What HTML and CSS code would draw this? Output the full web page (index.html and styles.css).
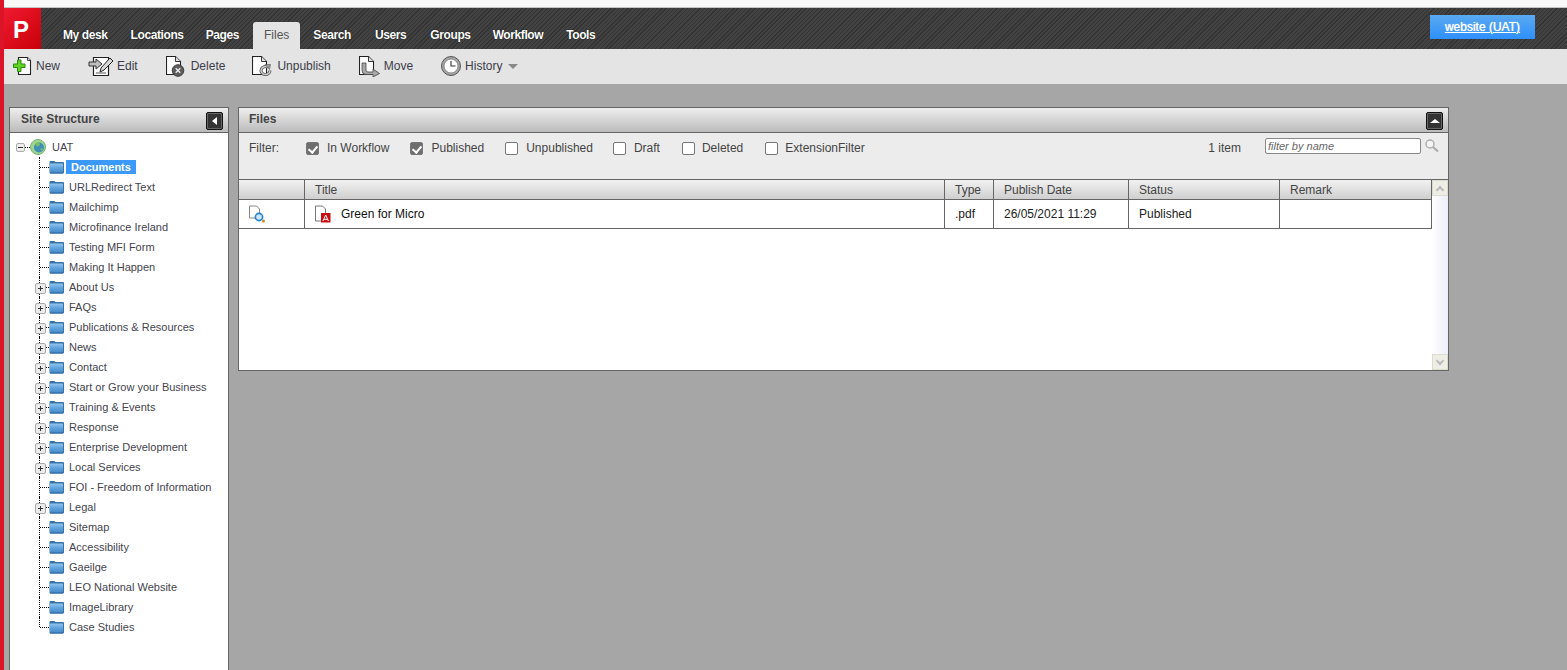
FILE: index.html
```html
<!DOCTYPE html>
<html lang="en">
<head>
<meta charset="utf-8">
<title>Files</title>
<link rel="stylesheet" href="styles.css">
</head>
<body>
<svg class="sprites" width="0" height="0" aria-hidden="true">
  <defs>
    <linearGradient id="fgrad" x1="0" y1="0" x2="0" y2="1">
      <stop offset="0" stop-color="#93c5ee"/>
      <stop offset=".45" stop-color="#62a4dd"/>
      <stop offset="1" stop-color="#4288c6"/>
    </linearGradient>
    <symbol id="folder" viewBox="0 0 15 14">
      <path d="M0.5 2 q0 -1 1 -1 h3.500 q1 0 1.500 1 h7.500 q1 0 1 1 v9.500 q0 1 -1 1 h-12.500 q-1 0 -1 -1 z" fill="#3673ab"/>
      <rect x="1" y="3.500" width="13" height="9.500" rx=".5" fill="url(#fgrad)"/>
      <rect x="1" y="12.500" width="13" height="1" fill="#2a659c"/>
    </symbol>
    <symbol id="doc" viewBox="0 0 22 22">
      <path d="M3.500 1.500 h9 l5 5 v13 h-14 z" fill="#fff" stroke="#222" stroke-width="1.100"/>
      <path d="M12.500 1.500 v5 h5" fill="#ddd" stroke="#222" stroke-width=".9"/>
    </symbol>
  </defs>
</svg>
<div class="topstrip"></div>
<header class="nav">
  <div class="logo">P</div>
  <nav class="menu">
    <a class="menu-item">My desk</a>
    <a class="menu-item">Locations</a>
    <a class="menu-item">Pages</a>
    <a class="menu-item active">Files</a>
    <a class="menu-item">Search</a>
    <a class="menu-item">Users</a>
    <a class="menu-item">Groups</a>
    <a class="menu-item">Workflow</a>
    <a class="menu-item">Tools</a>
  </nav>
  <a class="site-btn" href="#">website (UAT)</a>
</header>
<div class="toolbar">
  <span class="tool t-new">
    <svg class="ticon" viewBox="0 0 22 22"><path d="M7.500 2.500 h9 l3 3 v14 h-12 z" fill="#fff" stroke="#222" stroke-width="1.100"/><path d="M16.500 2.500 v3 h3" fill="#ddd" stroke="#222" stroke-width=".8"/><path d="M2.500 9 h4 v-4 h3.500 v4 h4 v3.500 h-4 v4 h-3.500 v-4 h-4 z" fill="#62d321" stroke="#2b8a12"/></svg>New
  </span>
  <span class="tool t-edit">
    <svg class="ticon wide" viewBox="0 0 26 22"><path d="M5.500 2.500 h15 v18 h-15 z" fill="#fff" stroke="#222" stroke-width="1.200"/><path d="M1 7 h7 v-3 l6 5 -6 5 v-3 h-7 z" fill="#bdbdbd" stroke="#333"/><path d="M12 17 l1 -4 9 -10 3 3 -9 9 z" fill="#d8d8d8" stroke="#222"/><path d="M8 18 h10" stroke="#555"/></svg>Edit
  </span>
  <span class="tool t-delete">
    <svg class="ticon" viewBox="3 0 22 22"><use href="#doc" width="22" height="22"/><circle cx="15" cy="15.500" r="5.800" fill="#5c5c5c" stroke="#3a3a3a"/><path d="M12.700 13.200 l4.600 4.600 m0 -4.600 l-4.600 4.600" stroke="#eee" stroke-width="1.300"/></svg>Delete
  </span>
  <span class="tool t-unpub">
    <svg class="ticon" viewBox="3 0 22 22"><use href="#doc" width="22" height="22"/><path d="M21 15.500 a4.500 4 0 1 1 -2 -3.300" fill="none" stroke="#555" stroke-width="3"/><path d="M21 15.500 a4.500 4 0 1 1 -2 -3.300" fill="none" stroke="#c8c8c8" stroke-width="1.500"/><path d="M16 9.500 l5.500 0 -1 5 z" fill="#999" stroke="#555" stroke-width=".6"/></svg>Unpublish
  </span>
  <span class="tool t-move">
    <svg class="ticon" viewBox="3 0 22 22"><use href="#doc" width="22" height="22"/><path d="M10 8 v7 a2 2 0 0 0 2 2 h5 v-3 l6.500 4.500 -6.500 3.500 v-2.500 h-7 a4 4 0 0 1 -4 -4 v-7.500 z" fill="#a8a8a8" stroke="#444" stroke-width=".8"/></svg>Move
  </span>
  <span class="tool t-history">
    <svg class="ticon" viewBox="0 0 22 22"><circle cx="11" cy="11" r="9.500" fill="#a6a6a6" stroke="#555"/><circle cx="11" cy="11" r="7" fill="#fff" stroke="#777" stroke-width=".8"/><path d="M11 6 v5 h4.500" fill="none" stroke="#333" stroke-width="1.100"/></svg>History<i class="caret"></i>
  </span>
</div>
<main class="workspace">
  <aside class="panel side">
    <div class="panel-head"><span>Site Structure</span><button class="pbtn"><i class="arrow-left"></i></button></div>
    <div class="tree">
      <div class="tree-root">
        <i class="exp minus"></i><i class="dots-h"></i>
        <svg class="globe" viewBox="0 0 16 16"><circle cx="8" cy="8" r="7.500" fill="#9ed592" stroke="#74b36d"/><circle cx="9" cy="8.500" r="5" fill="#3f8fb8"/><path d="M5 4 l4 -1 1 3 -3 2 z M10 10 l3 -1 -1 3 z" fill="#7cc062"/></svg>
        <span class="root-label">UAT</span>
      </div>
      <ul class="tree-list">
        <li class="node"><i class="slot"></i><svg class="folder"><use href="#folder"/></svg><span class="label sel">Documents</span></li>
        <li class="node"><i class="slot"></i><svg class="folder"><use href="#folder"/></svg><span class="label">URLRedirect Text</span></li>
        <li class="node"><i class="slot"></i><svg class="folder"><use href="#folder"/></svg><span class="label">Mailchimp</span></li>
        <li class="node"><i class="slot"></i><svg class="folder"><use href="#folder"/></svg><span class="label">Microfinance Ireland</span></li>
        <li class="node"><i class="slot"></i><svg class="folder"><use href="#folder"/></svg><span class="label">Testing MFI Form</span></li>
        <li class="node"><i class="slot"></i><svg class="folder"><use href="#folder"/></svg><span class="label">Making It Happen</span></li>
        <li class="node"><i class="slot plus"></i><svg class="folder"><use href="#folder"/></svg><span class="label">About Us</span></li>
        <li class="node"><i class="slot plus"></i><svg class="folder"><use href="#folder"/></svg><span class="label">FAQs</span></li>
        <li class="node"><i class="slot plus"></i><svg class="folder"><use href="#folder"/></svg><span class="label">Publications &amp; Resources</span></li>
        <li class="node"><i class="slot plus"></i><svg class="folder"><use href="#folder"/></svg><span class="label">News</span></li>
        <li class="node"><i class="slot plus"></i><svg class="folder"><use href="#folder"/></svg><span class="label">Contact</span></li>
        <li class="node"><i class="slot plus"></i><svg class="folder"><use href="#folder"/></svg><span class="label">Start or Grow your Business</span></li>
        <li class="node"><i class="slot plus"></i><svg class="folder"><use href="#folder"/></svg><span class="label">Training &amp; Events</span></li>
        <li class="node"><i class="slot plus"></i><svg class="folder"><use href="#folder"/></svg><span class="label">Response</span></li>
        <li class="node"><i class="slot plus"></i><svg class="folder"><use href="#folder"/></svg><span class="label">Enterprise Development</span></li>
        <li class="node"><i class="slot plus"></i><svg class="folder"><use href="#folder"/></svg><span class="label">Local Services</span></li>
        <li class="node"><i class="slot"></i><svg class="folder"><use href="#folder"/></svg><span class="label">FOI - Freedom of Information</span></li>
        <li class="node"><i class="slot plus"></i><svg class="folder"><use href="#folder"/></svg><span class="label">Legal</span></li>
        <li class="node"><i class="slot"></i><svg class="folder"><use href="#folder"/></svg><span class="label">Sitemap</span></li>
        <li class="node"><i class="slot"></i><svg class="folder"><use href="#folder"/></svg><span class="label">Accessibility</span></li>
        <li class="node"><i class="slot"></i><svg class="folder"><use href="#folder"/></svg><span class="label">Gaeilge</span></li>
        <li class="node"><i class="slot"></i><svg class="folder"><use href="#folder"/></svg><span class="label">LEO National Website</span></li>
        <li class="node"><i class="slot"></i><svg class="folder"><use href="#folder"/></svg><span class="label">ImageLibrary</span></li>
        <li class="node last"><i class="slot"></i><svg class="folder"><use href="#folder"/></svg><span class="label">Case Studies</span></li>
      </ul>
    </div>
  </aside>
  <section class="panel files">
    <div class="panel-head"><span>Files</span><button class="pbtn"><i class="arrow-up"></i></button></div>
    <div class="filters">
      <span class="f-title">Filter:</span>
      <label class="chk c1"><i class="box on"></i>In Workflow</label>
      <label class="chk c2"><i class="box on"></i>Published</label>
      <label class="chk c3"><i class="box"></i>Unpublished</label>
      <label class="chk c4"><i class="box"></i>Draft</label>
      <label class="chk c5"><i class="box"></i>Deleted</label>
      <label class="chk c6"><i class="box"></i>ExtensionFilter</label>
      <span class="count">1 item</span>
      <span class="search"><span class="search-input">filter by name</span>
        <svg class="lens" viewBox="0 0 16 16"><circle cx="6" cy="6" r="4" fill="#f4f4f4" stroke="#b0b0b0" stroke-width="1.500"/><path d="M9 9 l5 4.500" stroke="#aaa" stroke-width="2"/></svg>
      </span>
    </div>
    <div class="grid-wrap">
      <div class="grid">
        <table class="table">
          <thead>
            <tr><th class="col-a"></th><th class="col-b">Title</th><th class="col-c">Type</th><th class="col-d">Publish Date</th><th class="col-e">Status</th><th class="col-f">Remark</th></tr>
          </thead>
          <tbody>
            <tr>
              <td class="cell-preview"><svg class="ficon" viewBox="0 0 18 18"><path d="M1.500 1 h7 l3 3 v9 h-10 z" fill="#fff" stroke="#888"/><circle cx="11" cy="12" r="3.600" fill="#cfe8fb" stroke="#1f80d0" stroke-width="1.600"/><circle cx="15.500" cy="16" r="1.500" fill="#c98a1c"/></svg></td>
              <td class="cell-title"><svg class="ficon" viewBox="0 0 18 18"><path d="M1.500 1 h7 l3 3 v12 h-10 z" fill="#fff" stroke="#777"/><rect x="7" y="8" width="9.500" height="9.500" fill="#c80f14"/><path d="M9 16 l2.700 -6 2.700 6 m-4.300 -1.700 h3.200" fill="none" stroke="#fff"/></svg><span>Green for Micro</span></td>
              <td>.pdf</td><td>26/05/2021 11:29</td><td>Published</td><td></td>
            </tr>
          </tbody>
        </table>
      </div>
      <div class="scroll">
        <span class="sbtn"><i class="chev up"></i></span>
        <span class="strack"></span>
        <span class="sbtn"><i class="chev down"></i></span>
      </div>
    </div>
  </section>
</main>
</body>
</html>
```
FILE: styles.css
```css
* { box-sizing: border-box; }
html { overflow: hidden; }
body {
  margin: 0;
  height: 670px;
  overflow: hidden;
  display: flex;
  flex-direction: column;
  border-left: 4px solid #dc1428;
  background: #a6a6a6;
  font: 12px "Liberation Sans", Arial, sans-serif;
  color: #333;
}
.sprites { position: absolute; }
.topstrip { height: 8px; flex: none; background: #f8f8f8; border-bottom: 1px solid #c4c4c4; }

.nav {
  flex: none;
  height: 41px;
  display: flex;
  background-color: #3a3a3a;
  background-image: repeating-linear-gradient(135deg, #333 0 1px, #424242 1px 3px);
}
.logo {
  width: 37px;
  height: 41px;
  background: linear-gradient(135deg, #f01a30, #c80008);
  color: #fff;
  font: bold 24px/43px "Liberation Sans", Arial, sans-serif;
  padding-left: 9px;
}
.menu { display: flex; margin-left: 12px; align-items: flex-end; }
.menu-item {
  display: block;
  height: 27px;
  padding: 6px 10px 0;
  margin-right: 3px;
  color: #fff;
  font-weight: bold;
  letter-spacing: -.4px;
  text-shadow: 0 0 1px #000;
  border-radius: 3px 3px 0 0;
}
.menu-item:nth-child(2) { margin-right: 2px; }
.menu-item:nth-child(3) { margin-right: 4px; }
.menu-item:nth-child(5) { margin-right: 4px; }
.menu-item:nth-child(6) { margin-right: 4px; }
.menu-item:nth-child(7) { margin-right: 2px; }
.menu-item.active {
  background: #e4e4e4;
  color: #555;
  font-weight: normal;
  letter-spacing: 0;
  text-shadow: none;
  padding: 6px 11px 0;
  margin-right: 3px;
}
.site-btn {
  margin: 7px 32px 0 auto;
  width: 105px;
  height: 24px;
  background: linear-gradient(#5aa9f0, #2e90fb);
  color: #fff;
  text-align: center;
  line-height: 24px;
  text-shadow: 0 0 1px #fff;
}

.toolbar {
  flex: none;
  height: 35px;
  padding-bottom: 2px;
  background: #e4e4e4;
  display: flex;
  align-items: center;
  color: #3c3c4a;
}
.tool { display: inline-flex; align-items: center; gap: 3px; }
.ticon { width: 22px; height: 22px; flex: none; }
.ticon.wide { width: 26px; }
.t-new { margin-left: 7px; }
.t-edit { margin-left: 28px; }
.t-delete { margin-left: 28px; }
.t-unpub { margin-left: 27px; }
.t-move { margin-left: 28px; }
.t-history { margin-left: 27px; }
.caret {
  width: 0; height: 0; margin-left: 3px; margin-top: 1px;
  border: 5px solid transparent; border-top: 5px solid #888; border-bottom: 0;
}

.workspace { flex: 1; display: flex; align-items: flex-start; gap: 9px; padding: 23px 0 0 5px; min-height: 0; }
.panel { background: #fff; border: 1px solid #666; flex: none; }
.side { width: 220px; align-self: stretch; border-bottom: 0; }
.files { width: 1211px; height: 264px; display: flex; flex-direction: column; }
.panel-head {
  height: 25px;
  flex: none;
  display: flex;
  align-items: center;
  justify-content: space-between;
  background: linear-gradient(#eeeeee, #bbbbbb);
  border-bottom: 1px solid #666;
  padding: 0 5px 2px 11px;
  font-weight: bold;
  color: #444;
}
.files .panel-head { padding-left: 10px; padding-right: 5px; }
.pbtn {
  width: 17px; height: 18px; padding: 0; margin: 3px 0 0;
  background: #333; border: 1px solid #111; border-radius: 2px;
  display: flex; align-items: center; justify-content: center;
  box-shadow: inset 0 0 0 1px #666;
}
.arrow-left { width: 0; height: 0; border: 4px solid transparent; border-right: 5px solid #fff; border-left: 0; }
.arrow-up { width: 0; height: 0; border: 5px solid transparent; border-bottom: 4px solid #fff; border-top: 0; }

.tree { padding-top: 4px; font-size: 11px; color: #44444e; }
.tree-root { display: flex; align-items: center; height: 20px; padding-left: 6px; }
.exp { width: 9px; height: 9px; border: 1px solid #aaa; background: #eee; border-radius: 2px; position: relative; flex: none; }
.minus::after { content: ""; position: absolute; left: 1px; top: 3px; width: 5px; height: 1px; background: #333; }
.dots-h { width: 5px; border-top: 1px dotted #000; flex: none; }
.globe { width: 16px; height: 16px; flex: none; }
.root-label { margin-left: 6px; }
.tree-list { list-style: none; margin: 0; padding: 0 0 0 29px; }
.node { display: flex; align-items: center; height: 20px; position: relative; border-left: 1px dotted #000; }
.node.last { border-left-color: transparent; }
.node.last::before { content: ""; position: absolute; left: -1px; top: 0; height: 10px; border-left: 1px dotted #000; }
.slot { width: 9px; border-top: 1px dotted #000; flex: none; position: relative; }
.slot.plus::after {
  content: ""; position: absolute; left: -5px; top: -5px; width: 9px; height: 9px;
  border: 1px solid #aaa; border-radius: 2px;
  background:
    linear-gradient(#333, #333) center / 5px 1px no-repeat,
    linear-gradient(#333, #333) center / 1px 5px no-repeat,
    #ececec;
}
.folder { width: 15px; height: 14px; flex: none; }
.label { margin-left: 5px; white-space: nowrap; }
.label.sel { background: #3b99fc; color: #fff; font-weight: bold; padding: 0 5px; margin-left: 2px; height: 14px; line-height: 14px; }

.filters { height: 47px; flex: none; background: #ececec; border-bottom: 1px solid #666; display: flex; align-items: flex-start; padding: 8px 8px 0 10px; color: #444; line-height: 15px; }
.f-title { width: 57px; }
.chk { display: inline-flex; align-items: center; gap: 8px; }
.box { width: 13px; height: 13px; border: 1px solid #777; border-radius: 2px; background: #fff; flex: none; position: relative; }
.box.on { background: #6e6e6e; }
.box.on::after { content: ""; position: absolute; left: 3px; top: 1px; width: 4px; height: 7px; border: solid #fff; border-width: 0 2px 2px 0; transform: rotate(40deg); }
.c2 { margin-left: 21px; }
.c3 { margin-left: 21px; }
.c4 { margin-left: 20px; }
.c5 { margin-left: 22px; gap: 7px; }
.c6 { margin-left: 22px; gap: 7px; }
.count { margin-left: auto; margin-right: 24px; }
.search { display: flex; align-items: center; gap: 3px; margin-top: -3px; }
.search-input { display: block; width: 156px; height: 16px; border: 1px solid #888; border-radius: 2px; background: #fff; font: italic 11px/14px "Liberation Sans", sans-serif; color: #666; padding-left: 2px; }
.lens { width: 16px; height: 16px; flex: none; }

.grid-wrap { flex: 1; display: flex; min-height: 0; background: #fff; }
.grid { width: 1193px; flex: none; }
.table { width: 1193px; border-collapse: separate; border-spacing: 0; table-layout: fixed; color: #222; }
.table th { height: 20px; padding: 0 10px; font-weight: normal; text-align: left; color: #444; background: linear-gradient(#f2f2f2, #cfcfcf); border-bottom: 1px solid #666; border-left: 1px solid #666; }
.table td { height: 29px; padding: 0 10px; border-bottom: 1px solid #666; border-left: 1px solid #666; }
.table tr > :first-child { border-left: 0; }
.table tr > :last-child { border-right: 1px solid #666; }
.table .cell-preview { padding-left: 9px; }
.table .cell-title { padding-left: 9px; color: #111; }
.col-a { width: 65px; }
.col-b { width: 640px; }
.col-c { width: 49px; }
.col-d { width: 135px; }
.col-e { width: 151px; }
.col-f { width: 153px; }
.cell-title span { margin-left: 9px; vertical-align: middle; }
.ficon { width: 18px; height: 18px; vertical-align: middle; }
.scroll { width: 16px; flex: none; display: flex; flex-direction: column; background: linear-gradient(90deg, #fff, #ecedf8); }
.sbtn { height: 16px; flex: none; background: #eeeee6; border: 1px solid #dcdccc; display: flex; align-items: center; justify-content: center; }
.strack { flex: 1; }
.chev { width: 6px; height: 6px; border: solid #bbb; border-width: 2px 0 0 2px; transform: rotate(45deg); margin-top: 3px; }
.chev.down { transform: rotate(225deg); margin-top: -3px; }
```
